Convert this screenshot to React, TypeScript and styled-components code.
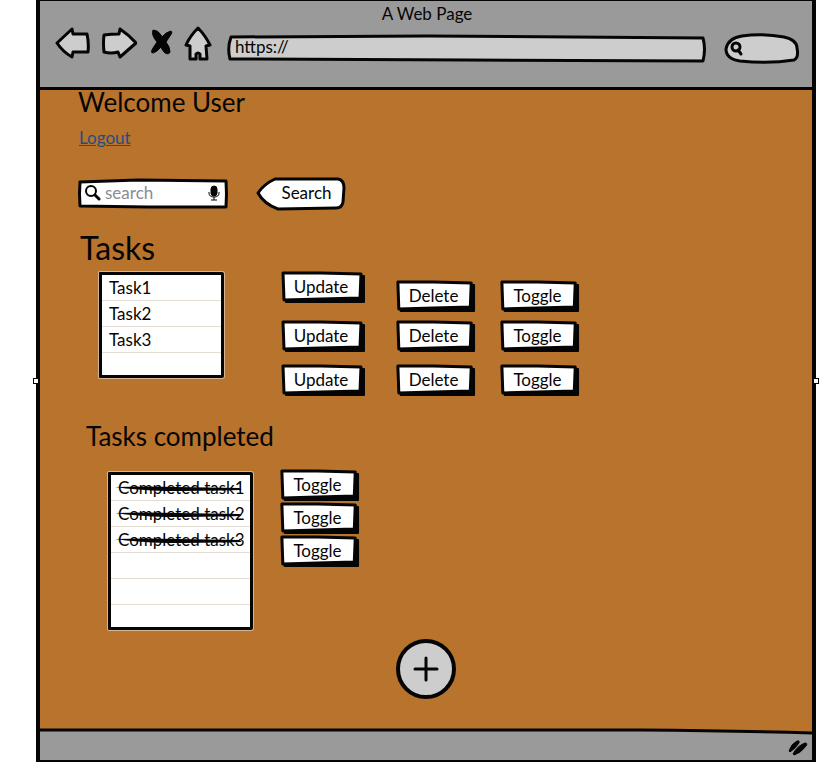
import React from "react";
import styled, { createGlobalStyle } from "styled-components";

const INK = "#050505";
const GREY = "#9a9a9a";
const LIGHT = "#cdcdcd";
const ORANGE = "#b8732c";

const GlobalStyle = createGlobalStyle`
  *, *::before, *::after { box-sizing: border-box; }
  body {
    margin: 0;
    background: #fff;
    color: ${INK};
    font-family: Lato, "Open Sans", sans-serif;
    font-size: 17px;
    line-height: 20px;
  }
  button, input { font: inherit; color: inherit; }
  h1, h2, h3, p, ul { margin: 0; padding: 0; font-weight: 400; }
`;

/* Browser window */

const Window = styled.div`
  position: relative;
  display: flex;
  flex-direction: column;
  min-height: 100vh;
  margin: 0 21px 0 36px;
  border: solid ${INK};
  border-width: 1px 4px 2px 4px;
  background: ${ORANGE};
`;

const Handle = styled.span<{ $side: "left" | "right" }>`
  position: absolute;
  top: 50%;
  ${(p) => p.$side}: -7px;
  width: 6px;
  height: 6px;
  margin-top: -3px;
  border: 1px solid ${INK};
  background: #fff;
`;

const Header = styled.header`
  background: ${GREY};
  border-bottom: 3px solid ${INK};
  padding: 3px 13px 25px 15px;
`;

const WindowTitle = styled.p`
  text-align: center;
`;

const Toolbar = styled.div`
  display: flex;
  align-items: center;
  height: 38px;
`;

const NavGroup = styled.nav`
  display: flex;
  align-items: center;
  gap: 11px;
  margin-right: 15px;
`;

const IconButton = styled.button`
  display: block;
  padding: 0;
  border: 0;
  background: none;
  cursor: pointer;
  svg { display: block; }
`;

const Outline = styled.svg`
  position: absolute;
  inset: 0;
  width: 100%;
  height: 100%;
  overflow: visible;
  pointer-events: none;
  stroke: ${INK};
  stroke-linejoin: round;
  path { vector-effect: non-scaling-stroke; }
`;

const Field = styled.label`
  position: relative;
  display: flex;
  align-items: center;
  > :not(:first-child) { position: relative; }
`;

const AddressField = styled(Field)`
  flex: 1;
  height: 27px;
  padding: 0 8px 2px;
  margin: 10px 19px 0 0;
`;

const WebSearchField = styled(Field)`
  width: 75px;
  height: 31px;
  margin-top: 10px;
  padding: 0 8px 0 4px;
`;

const TextInput = styled.input`
  flex: 1;
  min-width: 0;
  padding: 0;
  border: 0;
  outline: 0;
  background: transparent;
  &::placeholder { color: #8b8b90; opacity: 1; }
`;

const Footer = styled.footer`
  position: relative;
  display: flex;
  justify-content: flex-end;
  align-items: flex-end;
  height: 29px;
  padding: 0 4px 4px 0;
  background: ${GREY};
`;

const FooterEdge = styled.svg`
  position: absolute;
  top: -4px;
  left: 0;
  width: 100%;
  height: 8px;
`;

/* Page content */

const Main = styled.main`
  flex: 1;
  padding: 0 38px 30px 38px;
`;

const Welcome = styled.h1`
  font-size: 26px;
  line-height: 24px;
`;

const Logout = styled.a`
  display: inline-block;
  margin: 14px 0 29px 1px;
  color: #1f4f80;
`;

const SearchForm = styled.form`
  display: flex;
  align-items: center;
  gap: 28px;
`;

const SearchField = styled(Field)`
  width: 150px;
  height: 31px;
  padding: 0 8px 2px 7px;
  gap: 4px;
`;

const SearchButton = styled.button`
  position: relative;
  width: 89px;
  height: 33px;
  padding: 0 0 2px 12px;
  border: 0;
  background: none;
  cursor: pointer;
  span { position: relative; }
`;

const Title = styled.h2<{ $small?: boolean }>`
  margin: ${(p) => (p.$small ? "26px 0 19px 8px" : "20px 0 5px 2px")};
  font-size: ${(p) => (p.$small ? 26 : 32)}px;
  line-height: ${(p) => (p.$small ? 28 : 36)}px;
`;

const Section = styled.section<{ $indent: number; $gap: number }>`
  display: flex;
  align-items: flex-start;
  gap: ${(p) => p.$gap}px;
  padding-left: ${(p) => p.$indent}px;
`;

const List = styled.ul<{ $width: number; $drop: number }>`
  width: ${(p) => p.$width}px;
  margin-top: ${(p) => p.$drop}px;
  border: 3px solid ${INK};
  border-radius: 1px 2px 2px 1px;
  box-shadow: 0 0 0 1px #d5b693;
  background: #fff;
  list-style: none;
`;

const ListRow = styled.li`
  height: 26px;
  padding: 3px 7px 0;
  border-bottom: 1px solid #e3ddd3;
  white-space: nowrap;
  &:last-child { height: 22px; border-bottom: 0; }
`;

const Done = styled.s`
  position: relative;
  text-decoration: none;
  svg {
    position: absolute;
    top: 8px;
    left: -3px;
    width: 100%;
    height: 6px;
  }
`;

const Actions = styled.div`
  display: grid;
  grid-template-columns: 115px 104px 80px;
  grid-template-rows: 49px 44px 32px;
`;

const ToggleStack = styled.div`
  display: flex;
  flex-direction: column;
  gap: 1px;
`;

const SketchButton = styled.button<{ $width: number; $low?: boolean }>`
  position: relative;
  width: ${(p) => p.$width}px;
  height: 32px;
  margin-top: ${(p) => (p.$low ? 9 : 0)}px;
  padding: 0 4px 1px 0;
  border: 0;
  background: none;
  cursor: pointer;
  span { position: relative; }
`;

const AddRow = styled.div`
  display: flex;
  justify-content: center;
  margin-top: 9px;
`;

const AddButton = styled.button`
  display: grid;
  place-items: center;
  width: 60px;
  height: 60px;
  padding: 0;
  border: 4px solid ${INK};
  border-radius: 50%;
  background: ${LIGHT};
  cursor: pointer;
`;

function Action({ label, width = 79, low }: { label: string; width?: number; low?: boolean }) {
  return (
    <SketchButton type="button" $width={width} $low={low}>
      <Outline viewBox="0 0 84 32" preserveAspectRatio="none" aria-hidden="true">
        <path d="M5 6 L83 5 L83 31 L5 31 Z" fill={INK} strokeWidth="2" />
        <path d="M2 2 L40 2 L80 3 L79 27 L40 28 L3 29 Z" fill="#fff" strokeWidth="3" />
      </Outline>
      <span>{label}</span>
    </SketchButton>
  );
}

const taskNames = ["Task1", "Task2", "Task3"];
const completedNames = ["Completed task1", "Completed task2", "Completed task3"];
const iconStroke = { stroke: INK, strokeWidth: 3, strokeLinejoin: "round" as const, strokeLinecap: "round" as const };

export default function App() {
  return (
    <>
      <GlobalStyle />
      <Window>
        <Header>
          <WindowTitle>A Web Page</WindowTitle>
          <Toolbar>
            <NavGroup aria-label="Browser">
              <IconButton type="button" aria-label="Back">
                <svg width="35" height="32" viewBox="0 0 35 32" fill={LIGHT} {...iconStroke}>
                  <path d="M2 16 L17 2 L18 7 L32 7 Q34 16 33 25 L18 25 L17 30 Q8 25 2 16Z" />
                </svg>
              </IconButton>
              <IconButton type="button" aria-label="Forward">
                <svg width="36" height="32" viewBox="0 0 36 32" fill={LIGHT} {...iconStroke}>
                  <path d="M3 8 Q10 7 18 7 L19 2 Q28 8 35 16 L19 30 L17 25 Q10 27 3 25 Q2 16 3 8Z" />
                </svg>
              </IconButton>
              <IconButton type="button" aria-label="Stop">
                <svg width="25" height="32" viewBox="0 0 25 32" fill={INK} stroke={INK} strokeWidth="1">
                  <path d="M5 3 Q10 3 13 8 L14 10 Q18 5 23 4 Q25 5 22 9 L18 15 Q22 20 22 25 Q21 28 17 26 Q14 23 13 20 Q9 25 5 26 Q2 26 5 21 L9 15 Q3 8 5 3Z" />
                </svg>
              </IconButton>
              <IconButton type="button" aria-label="Home">
                <svg width="28" height="35" viewBox="0 0 28 35" fill={LIGHT} {...iconStroke}>
                  <path d="M14 2 Q21 9 26 19 L22 20 L23 33 L16 33 L16 28 Q14 26 12 28 L12 33 L6 33 L6 20 L2 19 Q6 10 14 2Z" />
                </svg>
              </IconButton>
            </NavGroup>
            <AddressField>
              <Outline viewBox="0 0 478 27" preserveAspectRatio="none" fill={LIGHT} strokeWidth="3" aria-hidden="true">
                <path d="M4 2 L200 1 L476 3 Q479 14 476 26 L240 25 L3 24 Q0 13 4 2Z" />
              </Outline>
              <TextInput aria-label="Address" defaultValue="https://" />
            </AddressField>
            <WebSearchField>
              <Outline viewBox="0 0 75 31" preserveAspectRatio="none" fill={LIGHT} strokeWidth="3" aria-hidden="true">
                <path d="M16 28 Q2 26 2 16 Q4 5 18 3 Q38 0 60 4 Q73 7 73 15 Q75 25 70 27 Q45 31 16 28Z" />
              </Outline>
              <svg width="16" height="18" viewBox="0 0 16 18" fill="none" {...iconStroke}>
                <circle cx="8" cy="8" r="4" />
                <path d="M10 11 L13 15" />
              </svg>
              <TextInput aria-label="Web search" />
            </WebSearchField>
          </Toolbar>
        </Header>

        <Main>
          <Welcome>Welcome User</Welcome>
          <Logout href="#logout">Logout</Logout>

          <SearchForm onSubmit={(e) => e.preventDefault()}>
            <SearchField>
              <Outline viewBox="0 0 150 31" preserveAspectRatio="none" fill="#fff" strokeWidth="3" aria-hidden="true">
                <path d="M2 4 L60 2 L148 3 Q149 16 148 29 L70 29 L2 28 Q1 15 2 4Z" />
              </Outline>
              <svg width="16" height="16" viewBox="0 0 16 16" fill="none" {...iconStroke} strokeWidth={2}>
                <circle cx="6" cy="6" r="5" />
                <path d="M10 10 L14 14" strokeWidth="3" />
              </svg>
              <TextInput aria-label="Search tasks" placeholder="search" />
              <svg width="12" height="16" viewBox="0 0 12 16" fill="none" stroke={INK} strokeWidth="1">
                <rect x="3" y="1" width="6" height="10" rx="3" fill={INK} />
                <path d="M1 7 V8 Q1 12 6 12 Q11 12 11 8 V7 M6 12 V15 M3 15 H9" />
              </svg>
            </SearchField>
            <SearchButton type="submit">
              <Outline viewBox="0 0 89 33" preserveAspectRatio="none" fill="#fff" strokeWidth="3" aria-hidden="true">
                <path d="M2 16 Q8 7 19 2 L82 2 Q88 3 88 11 L87 25 Q86 31 80 31 L22 32 Q8 27 2 16Z" />
              </Outline>
              <span>Search</span>
            </SearchButton>
          </SearchForm>

          <Title>Tasks</Title>
          <Section $indent={21} $gap={57}>
            <List $width={125} $drop={1}>
              {taskNames.map((name) => (
                <ListRow key={name}>{name}</ListRow>
              ))}
              <ListRow />
            </List>
            <Actions>
              {taskNames.map((name, i) => (
                <React.Fragment key={name}>
                  <Action label="Update" width={84} />
                  <Action label="Delete" low={i === 0} />
                  <Action label="Toggle" low={i === 0} />
                </React.Fragment>
              ))}
            </Actions>
          </Section>

          <Title $small>Tasks completed</Title>
          <Section $indent={30} $gap={27}>
            <List $width={145} $drop={3}>
              {completedNames.map((name) => (
                <ListRow key={name}>
                  <Done>
                    {name}
                    <svg viewBox="0 0 122 6" preserveAspectRatio="none" aria-hidden="true">
                      <path d="M0 2 Q30 1 60 2 L120 3 L122 5 Q80 6 50 6 Q20 5 0 2Z" fill={INK} />
                    </svg>
                  </Done>
                </ListRow>
              ))}
              <ListRow />
              <ListRow />
              <ListRow />
            </List>
            <ToggleStack>
              {completedNames.map((name) => (
                <Action key={name} label="Toggle" />
              ))}
            </ToggleStack>
          </Section>

          <AddRow>
            <AddButton type="button" aria-label="Add task">
              <svg width="26" height="26" viewBox="0 0 26 26" fill="none" {...iconStroke}>
                <path d="M13 2 V24 M2 13 H24" />
              </svg>
            </AddButton>
          </AddRow>
        </Main>

        <Footer>
          <FooterEdge viewBox="0 0 772 8" preserveAspectRatio="none" aria-hidden="true">
            <path d="M0 0 H772 V6 H0Z" fill={ORANGE} />
            <path d="M0 3 L300 3 L600 3 Q700 4 772 6 V8 H0Z" fill={GREY} />
            <path d="M0 3 L300 3 L600 3 Q700 4 772 6" fill="none" stroke={INK} strokeWidth="3" />
          </FooterEdge>
          <svg width="20" height="17" viewBox="0 0 20 17" fill={INK} stroke={INK} strokeWidth="1" aria-hidden="true">
            <path d="M1 12 Q3 5 9 2 Q12 1 11 4 Q8 9 2 13Z" />
            <path d="M5 15 Q9 7 17 4 Q20 4 18 7 Q13 14 6 16Z" />
          </svg>
        </Footer>
        <Handle $side="left" />
        <Handle $side="right" />
      </Window>
    </>
  );
}
